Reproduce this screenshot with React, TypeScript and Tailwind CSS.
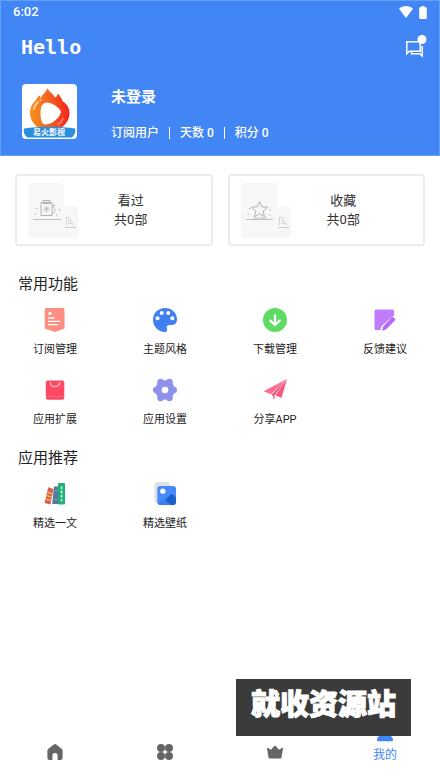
import type { ReactNode } from 'react';

type Feature = {
  label: string;
  icon: ReactNode;
};

const FEATURES: Feature[] = [
  { label: '订阅管理', icon: <SubscribeIcon /> },
  { label: '主题风格', icon: <PaletteIcon /> },
  { label: '下载管理', icon: <DownloadIcon /> },
  { label: '反馈建议', icon: <FeedbackIcon /> },
  { label: '应用扩展', icon: <BagIcon /> },
  { label: '应用设置', icon: <GearIcon /> },
  { label: '分享APP', icon: <PlaneIcon /> },
];

const RECOMMENDED: Feature[] = [
  { label: '精选一文', icon: <BooksIcon /> },
  { label: '精选壁纸', icon: <WallpaperIcon /> },
];

function SubscribeIcon() {
  return (
    <svg viewBox="0 0 24 24" className="size-6" aria-hidden="true">
      <path d="M3 0h17a1.500 1.500 0 0 1 1.500 1.500v19L12 24l-10.300-3.500v-19A1.500 1.500 0 0 1 3 0Z" fill="#fe8e82" />
      <circle cx="7" cy="5.500" r="1.700" fill="#fff" />
      <path d="M5.500 10h5.500M5.500 13.300h11.500M5.500 16.700h9" stroke="#fff" strokeWidth="1.300" strokeLinecap="round" />
    </svg>
  );
}

function PaletteIcon() {
  return (
    <svg viewBox="0 0 24 24" className="size-6" aria-hidden="true">
      <path
        d="M12 0C5.300 0 0 5 0 11.500 0 18.500 5.500 24 12 24c1.800 0 2.700-1.600 1.900-3.200-.9-1.900.2-3.900 2.600-3.900h2.300c3.200 0 5.200-2.300 5.200-5.500C24 4.700 18.700 0 12 0Z"
        fill="#3f7fef"
      />
      <circle cx="4.500" cy="10.300" r="2" fill="#fff" />
      <circle cx="8.700" cy="4.900" r="2" fill="#fff" />
      <circle cx="15.200" cy="4.900" r="2" fill="#fff" />
      <circle cx="19.300" cy="10.300" r="2" fill="#fff" />
    </svg>
  );
}

function DownloadIcon() {
  return (
    <svg viewBox="0 0 24 24" className="size-6" aria-hidden="true">
      <circle cx="12" cy="12" r="12" fill="#5edb63" />
      <path d="M12 7.500v9M7.300 12.600l4.700 4.400 4.700-4.400" fill="none" stroke="#fff" strokeWidth="2.300" strokeLinecap="round" strokeLinejoin="round" />
    </svg>
  );
}

function FeedbackIcon() {
  return (
    <svg viewBox="0 0 24 24" className="size-6" aria-hidden="true">
      <path d="M3 1.500h16.500A1.500 1.500 0 0 1 21 3v4.700L8.600 18.500 7.300 22H3a1.500 1.500 0 0 1-1.500-1.500V3A1.500 1.500 0 0 1 3 1.500Z" fill="#c07cfb" />
      <path d="M21 8.300 9.600 18.200 8.300 22.500" fill="none" stroke="#fff" strokeWidth="1.200" />
      <path d="m20.300 9.200 1.800 1.700a1 1 0 0 1 0 1.400L13 21.500 9 22.800l1.200-4.300 8.700-9.200a1 1 0 0 1 1.400-.1Z" fill="#b269f4" />
    </svg>
  );
}

function BagIcon() {
  return (
    <svg viewBox="0 0 24 24" className="size-6" aria-hidden="true">
      <rect x="2.800" y="2.500" width="18.500" height="19.300" rx="2" fill="#fd4963" />
      <path d="M3 18.500h18" stroke="#ff8292" strokeWidth=".6" />
      <path d="M7.300 4.500c.4 5.500 8.800 5.500 9.400 0" fill="none" stroke="#ffc2ca" strokeWidth="1.200" strokeLinecap="round" />
    </svg>
  );
}

function GearIcon() {
  return (
    <svg viewBox="0 0 24 24" className="size-6" fill="#8f92ec" aria-hidden="true">
      <circle cx="12" cy="12" r="9.800" />
      <circle cx="3.300" cy="12" r="3.300" />
      <circle cx="20.700" cy="12" r="3.300" />
      <circle cx="7.600" cy="4.200" r="3.400" />
      <circle cx="16.400" cy="4.200" r="3.400" />
      <circle cx="7.600" cy="19.800" r="3.400" />
      <circle cx="16.400" cy="19.800" r="3.400" />
      <circle cx="12" cy="12" r="3.300" fill="#fff" />
    </svg>
  );
}

function PlaneIcon() {
  return (
    <svg viewBox="0 0 24 24" className="size-6" aria-hidden="true">
      <path d="M24 1 .5 13.200l7.500 3L24 1Z" fill="#fb6f90" />
      <path d="M24 1 12.500 17.300l6 2.700L24 1Z" fill="#f9587e" />
      <path d="M24 1 9 16.200l-.3 1.300 2.300.8L24 1Z" fill="#e8557a" />
      <path d="m10 18 2.600 1-2.300 2.700L10 18Z" fill="#f76b8d" />
    </svg>
  );
}

function BooksIcon() {
  return (
    <svg viewBox="0 0 24 24" className="size-6" aria-hidden="true">
      <path d="m5.300 5.300 5.200 1.600L7.400 22.600l-5.900-1.700L5.300 5.300Z" fill="#d9604f" />
      <path d="m4.200 10.200 5.300 1.500M3.400 13.500l5.300 1.600M2.600 17l5.200 1.400" stroke="#efb35e" strokeWidth="1.500" />
      <path d="M11 4.500h4.300V22H9.200L11 4.500Z" fill="#527a9e" />
      <path d="M11.800 8.500h2.200M11.400 17.500h2.600" stroke="#8db2cb" strokeWidth="1" />
      <rect x="15" y="1" width="7" height="21.500" rx="1" fill="#20af7b" />
      <path d="M18.600 4.300v15" stroke="#baf4d5" strokeWidth="1.700" strokeDasharray="3 1.200" />
    </svg>
  );
}

function WallpaperIcon() {
  return (
    <svg viewBox="0 0 24 24" className="size-6" aria-hidden="true">
      <rect x="1.300" y="0" width="16" height="21.500" rx="4" fill="#e0e1e3" />
      <rect x="4.300" y="4" width="18.700" height="19" rx="3" fill="#478af7" />
      <path d="M12 18.200 17 13c1.200-1.200 2.300-1.100 3.400 0l2.600 2.700V20a3 3 0 0 1-3 3h-3.300L12 18.200Z" fill="#1b5fcc" />
      <path d="m5.500 22 5.200-5.500 6.500 6.500H7.300c-.8 0-1.400-.4-1.800-1Z" fill="#397df0" />
      <circle cx="9.800" cy="9.200" r="2.600" fill="#fff" />
    </svg>
  );
}

function Avatar() {
  return (
    <svg viewBox="0 0 55 55" className="size-[55px] shrink-0 rounded bg-white" role="img" aria-label="易火影视">
      <defs>
        <linearGradient id="flame" x1="0" y1="0" x2="1" y2="0">
          <stop offset="0" stopColor="#f7931e" />
          <stop offset=".55" stopColor="#f65a1f" />
          <stop offset="1" stopColor="#f5231d" />
        </linearGradient>
      </defs>
      <path
        d="M25.500 4c1 4 5.500 5 7.500 9.500 2-1 2.500-2 2.500-4 3 2 3.500 4.500 5 7.500C45 20 47.500 24 47.500 29c0 10-8.500 18-19.500 18S8 39 8 28.500c0-5 2.500-9.500 6-12.500 1-2 1.500-3.500 4-4.500 0 1.500 0 2 1 2.500 1-4 5.500-5.500 6.500-10Z"
        fill="url(#flame)"
      />
      <path d="M12 25c.5-3 2-5.500 4-7" fill="none" stroke="#ffd0a0" strokeWidth="1.800" strokeLinecap="round" />
      <circle cx="18.500" cy="16" r="1" fill="#ffd0a0" />
      <path d="M36 40.500c2.500-1.500 4-3.500 5-6" fill="none" stroke="#ff8d78" strokeWidth="1.500" strokeLinecap="round" />
      <path d="M24 18.500c6 0 13.500 5 15 9.500-1.500 6-8.500 12-15.500 12.500-3 0-4.500-3-5-9-.3-6 .5-12 5.500-13Z" fill="#fff" />
      <path d="M2 44.500C17 42 38 42 53 44.500c1 3-.5 7-3.500 9h-44C2.500 51.500 1 47.500 2 44.500Z" fill="#2b8fdf" />
      <text x="27" y="51" textAnchor="middle" fontSize="8" fontWeight="700" fill="#fff">
        易火影视
      </text>
    </svg>
  );
}

function WatchedArt() {
  return (
    <svg viewBox="0 0 36 55" className="h-[55px] w-9" fill="none" stroke="#b3b3b3" aria-hidden="true">
      <path d="M5 36.500h28" stroke="#c0c0c0" />
      <path d="M13 19.500h11v13H13zM15 17.500h7v3h-7z" />
      <path d="M18.500 22.500v7M15 26h7M16 23.500l5 5M21 23.500l-5 5" strokeWidth=".7" />
      <path d="M24 22h2.500l-1 3 2 2-3.500 5" strokeWidth=".8" />
      <path d="M8 25.500h1.500M6.500 31H8M31 27h1.500M28 32h1.500" strokeWidth="1.200" />
    </svg>
  );
}

function FavoriteArt() {
  return (
    <svg viewBox="0 0 36 55" className="h-[55px] w-9" fill="none" stroke="#b3b3b3" aria-hidden="true">
      <path d="M5 36.500h27M12 35h14" stroke="#c0c0c0" />
      <path d="m18.500 18.500 2.300 5.200 5.700.6-4.300 3.800 1.300 5.600-5-2.900-5 2.900 1.300-5.600-4.300-3.800 5.700-.6 2.300-5.200Z" strokeLinejoin="round" />
      <path d="M8 25.500h1.500M6.500 31H8M28.500 27H30M28 32h1.500" strokeWidth="1.200" />
    </svg>
  );
}

function StatCard({ title, count, art }: { title: string; count: string; art: ReactNode }) {
  return (
    <button type="button" className="flex h-[72px] flex-1 items-center rounded border-2 border-[#ebebeb] px-[11px]">
      <span className="flex items-end">
        <span className="rounded-l rounded-tr bg-[#f7f7f7]">{art}</span>
        <span className="rounded-r bg-[#f7f7f7]">
          <svg viewBox="0 0 14 32" className="h-8 w-3.5" fill="none" stroke="#cbcbcb" aria-hidden="true">
            <path d="M1 21.500h11" />
            <path d="M2.500 19v-8l4 2v2l3 3v1.500M4 15h2M4 17.500h4" strokeWidth=".8" />
          </svg>
        </span>
      </span>
      <span className="flex flex-1 flex-col pr-4 text-center text-[13px] leading-[19px] text-[#333]">
        <span>{title}</span>
        <span>{count}</span>
      </span>
    </button>
  );
}

function FeatureSection({ title, items }: { title: string; items: Feature[] }) {
  return (
    <section>
      <h2 className="px-[18px] text-[15px] leading-6 text-[#222]">{title}</h2>
      <div className="mt-2.5 grid grid-cols-4">
        {items.map((item) => (
          <button key={item.label} type="button" className="flex h-[70px] flex-col items-center gap-2 pt-0.5 text-[11px] leading-5 text-[#222]">
            {item.icon}
            <span>{item.label}</span>
          </button>
        ))}
      </div>
    </section>
  );
}

export default function App() {
  return (
    <div className="relative flex min-h-screen flex-col bg-white font-['Roboto','Noto_Sans_CJK_SC',sans-serif]">
      <header className="border border-[#649ffa] bg-[#4285f4] pb-4 text-white">
        <div className="flex h-[22px] items-center justify-between px-3">
          <span className="text-[13px] font-medium">6:02</span>
          <div className="flex items-center gap-1.5">
            <svg viewBox="0 0 14 12" className="h-3 w-3.5" fill="currentColor" aria-hidden="true">
              <path d="M0 2.800C4-.8 10-.8 14 2.800L7 12 0 2.800Z" />
            </svg>
            <svg viewBox="0 0 8 13" className="h-[13px] w-2" fill="currentColor" aria-hidden="true">
              <path d="M2.500 0h3v1.300H7a.8.800 0 0 1 .8.800v10a.8.800 0 0 1-.8.800H1a.8.800 0 0 1-.8-.8v-10A.8.800 0 0 1 1 1.300h1.500Z" />
            </svg>
          </div>
        </div>
        <div className="flex h-12 items-center justify-between pr-3 pl-5">
          <h1 className="font-['DejaVu_Sans_Mono',monospace] text-xl font-bold">Hello</h1>
          <button type="button" aria-label="消息">
            <svg viewBox="0 0 24 24" className="size-6" fill="none" stroke="currentColor" aria-hidden="true">
              <path d="M3.800 6.700h13.400v9.500H6.300l-2.500 2.500v-12Z" strokeWidth="1.500" />
              <path d="M19.200 11v10l-2.500-2.200H8.500v-2" strokeWidth="1.500" />
              <circle cx="19" cy="4.500" r="4.500" fill="currentColor" stroke="none" />
            </svg>
          </button>
        </div>
        <div className="mt-[13px] flex gap-[34px] px-[21px]">
          <Avatar />
          <div className="flex flex-col justify-between pt-px">
            <p className="text-[15px] leading-6 font-bold">未登录</p>
            <p className="flex items-center gap-2.5 text-xs leading-3 font-medium">
              <span>订阅用户</span>
              <span className="h-3 w-px bg-white" />
              <span>天数 0</span>
              <span className="h-3 w-px bg-white" />
              <span>积分 0</span>
            </p>
          </div>
        </div>
      </header>

      <main className="flex-1">
        <div className="flex gap-[15px] px-[15px] pt-[18px] pb-[26px]">
          <StatCard title="看过" count="共0部" art={<WatchedArt />} />
          <StatCard title="收藏" count="共0部" art={<FavoriteArt />} />
        </div>
        <FeatureSection title="常用功能" items={FEATURES} />
        <FeatureSection title="应用推荐" items={RECOMMENDED} />
      </main>

      <nav className="grid h-[60px] grid-cols-4 justify-items-center text-[#666]">
        <a href="#home" aria-label="首页" className="flex items-center">
          <svg viewBox="0 0 18 18" className="size-[18px]" fill="currentColor" aria-hidden="true">
            <path d="M7.800 1.500a2 2 0 0 1 2.400 0l5.400 4.300c.6.500 1 1.200 1 2V15a2 2 0 0 1-2 2h-3v-4.300a2.600 2.600 0 0 0-5.200 0V17h-3a2 2 0 0 1-2-2V7.800c0-.8.4-1.500 1-2l5.400-4.300Z" />
          </svg>
        </a>
        <a href="#category" aria-label="分类" className="flex items-center">
          <svg viewBox="0 0 18 18" className="size-[18px]" fill="currentColor" aria-hidden="true">
            <circle cx="5" cy="5" r="4" />
            <circle cx="13" cy="5" r="4" />
            <circle cx="5" cy="13" r="4" />
            <circle cx="13" cy="13" r="4" />
          </svg>
        </a>
        <a href="#vip" aria-label="会员" className="flex items-center">
          <svg viewBox="0 0 18 18" className="size-[18px]" fill="currentColor" aria-hidden="true">
            <path d="M1 5.500c0-.6.600-.8 1-.5l3 1.800L8.300 3a1 1 0 0 1 1.400 0L13 6.800 16 5c.4-.3 1-.1 1 .5l-1.500 9c-.1.600-.5 1-1.200 1H3.700c-.7 0-1.100-.4-1.200-1L1 5.500Z" />
          </svg>
        </a>
        <a href="#me" className="flex flex-col items-center gap-1 pt-px text-xs text-[#4285f4]">
          <svg viewBox="0 0 18 20" className="h-5 w-[18px]" fill="currentColor" aria-hidden="true">
            <circle cx="9" cy="5" r="4.500" />
            <path d="M1 17c0-3.500 3.500-5.500 8-5.500s8 2 8 5.500c0 .8-.5 1.200-1.200 1.200H2.200C1.500 18.200 1 17.800 1 17Z" />
          </svg>
          <span>我的</span>
        </a>
      </nav>

      <div className="absolute right-[29px] bottom-[46px] bg-[#3b3b3b] px-[15px] pt-1.5 pb-2.5 text-[29px] leading-[41px] font-black text-white [-webkit-text-stroke:1px_white]">
        就收资源站
      </div>
    </div>
  );
}
